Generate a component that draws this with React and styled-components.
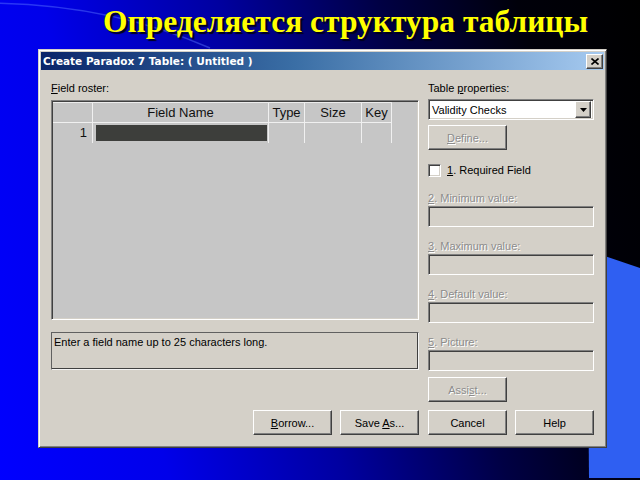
import React from "react";
import styled, { createGlobalStyle } from "styled-components";

const GlobalStyle = createGlobalStyle`
  html, body {
    margin: 0;
    padding: 0;
  }
  body {
    width: 640px;
    height: 480px;
    overflow: hidden;
    background: #000;
  }
`;

const Slide = styled.div`
  position: relative;
  width: 640px;
  height: 480px;
  overflow: hidden;
  display: flex;
  flex-direction: column;
  background: linear-gradient(
    75deg,
    #0000ff 0%,
    #0000ea 22%,
    #0000a0 45%,
    #000044 66%,
    #00000a 84%,
    #000 100%
  );
`;

const Backdrop = styled.svg`
  position: absolute;
  left: 0;
  top: 0;
  width: 640px;
  height: 480px;
  pointer-events: none;
`;

const Heading = styled.h1`
  position: relative;
  margin: 0;
  height: 49px;
  padding-left: 103px;
  box-sizing: border-box;
  font-family: "Liberation Serif", "Times New Roman", serif;
  font-weight: bold;
  font-size: 31.5px;
  line-height: 44px;
  color: #ffff00;
  text-shadow: 2px 2px 1px #00001a;
  white-space: nowrap;
`;

const Dialog = styled.div`
  position: relative;
  margin-left: 38px;
  width: 569px;
  height: 399px;
  box-sizing: border-box;
  padding: 2px;
  display: flex;
  flex-direction: column;
  background: #d4d0c8;
  border: 1px solid;
  border-color: #d4d0c8 #404040 #404040 #d4d0c8;
  box-shadow: inset 1px 1px #fff, inset -1px -1px #808080;
  font-family: "Liberation Sans", Arial, sans-serif;
  font-size: 11px;
  color: #000;
`;

const TitleBar = styled.div`
  height: 18px;
  display: flex;
  align-items: center;
  justify-content: space-between;
  padding: 0 1px 0 2px;
  background: linear-gradient(to right, #0a246a, #3a6ea5 45%, #a6caf0);
  color: #fff;
  font-family: "DejaVu Sans", Verdana, sans-serif;
  font-weight: bold;
  font-size: 10.5px;
`;

const raised = `
  border: 1px solid;
  border-color: #fff #404040 #404040 #fff;
  box-shadow: inset -1px -1px #808080;
  background: #d4d0c8;
  box-sizing: border-box;
`;

const sunken = `
  border: 1px solid;
  border-color: #808080 #fff #fff #808080;
  box-shadow: inset 1px 1px #404040, inset -1px -1px #d4d0c8;
  box-sizing: border-box;
`;

const CloseButton = styled.div`
  ${raised}
  width: 17px;
  height: 15px;
  display: flex;
  align-items: center;
  justify-content: center;
`;

const Body = styled.div`
  flex: 1;
  display: flex;
  gap: 9px;
  padding: 11px 10px 10px 10px;
`;

const Column = styled.div`
  width: ${(p) => p.$width}px;
  display: flex;
  flex-direction: column;
`;

const Label = styled.div`
  height: 14px;
  line-height: 14px;
  white-space: nowrap;
  margin-top: ${(p) => p.$top || 0}px;
  color: ${(p) => (p.$disabled ? "#8c8c8c" : "#000")};
  text-shadow: ${(p) => (p.$disabled ? "1px 1px #fff" : "none")};
`;

const Key = styled.span`
  text-decoration: underline;
`;

const Roster = styled.div`
  ${sunken}
  margin-top: 5px;
  height: 220px;
  padding: 1px;
  background: #c6c6c6;
`;

const RosterGrid = styled.div`
  display: grid;
  grid-template-columns: 40px 176px 36px 57px 30px;
  grid-template-rows: 20px 20px;
  width: max-content;
  border-top: 1px solid #ececec;
`;

const Cell = styled.div`
  box-sizing: border-box;
  border-right: 1px solid #f0f0f0;
  border-bottom: ${(p) => (p.$head ? "1px solid #f0f0f0" : "none")};
  font-size: 13px;
  line-height: 19px;
  text-align: ${(p) => p.$align || "center"};
  padding-right: ${(p) => (p.$align === "right" ? 5 : 0)}px;
  color: #111;
`;

const ActiveField = styled.div`
  margin: 2px 1px 1px 3px;
  height: 16px;
  background: #3d3e3b;
`;

const StatusBox = styled.div`
  margin-top: 12px;
  height: 38px;
  box-sizing: border-box;
  border: 1px solid;
  border-color: #606060 #f4f4f4 #f4f4f4 #606060;
  box-shadow: inset -1px -1px #404040;
  padding: 2px 2px;
  line-height: 14px;
`;

const ButtonRow = styled.div`
  margin-top: auto;
  display: flex;
  justify-content: ${(p) => p.$justify || "flex-end"};
  gap: ${(p) => p.$gap || 8}px;
`;

const Button = styled.div`
  ${raised}
  width: 79px;
  height: 25px;
  margin-top: ${(p) => p.$top || 0}px;
  display: flex;
  align-items: center;
  justify-content: center;
  color: ${(p) => (p.$disabled ? "#8c8c8c" : "#000")};
  text-shadow: ${(p) => (p.$disabled ? "1px 1px #fff" : "none")};
`;

const Select = styled.div`
  ${sunken}
  margin-top: 4px;
  height: 21px;
  background: #fff;
  display: flex;
  align-items: center;
  justify-content: space-between;
  padding: 2px 2px 2px 3px;
`;

const DropButton = styled.div`
  ${raised}
  width: 16px;
  height: 17px;
  display: flex;
  align-items: center;
  justify-content: center;
`;

const CheckRow = styled.div`
  margin-top: 14px;
  height: 13px;
  display: flex;
  align-items: center;
  gap: 6px;
  line-height: 13px;
`;

const CheckBox = styled.div`
  ${sunken}
  width: 13px;
  height: 13px;
  background: #fff;
`;

const Field = styled.div`
  margin-top: 1px;
  height: 21px;
  ${sunken}
  background: #d4d0c8;
`;

const props = [
  { key: "2", text: ". Minimum value:", top: 14 },
  { key: "3", text: ". Maximum value:", top: 12 },
  { key: "4", text: ". Default value:", top: 12 },
  { key: "5", text: ". Picture:", top: 12 },
];

export default function App() {
  return (
    <>
      <GlobalStyle />
      <Slide>
        <Backdrop viewBox="0 0 640 480">
          <path
            d="M -10 3 Q 110 4 210 48"
            fill="none"
            stroke="#5a78ff"
            strokeOpacity="0.45"
            strokeWidth="1.5"
          />
          <polygon points="587,250 640,268 640,478 589,478" fill="#2f5ff2" />
        </Backdrop>

        <Heading>Определяется структура таблицы</Heading>

        <Dialog>
          <TitleBar>
            <span>Create Paradox 7 Table: ( Untitled )</span>
            <CloseButton>
              <svg width="8" height="7" viewBox="0 0 8 7">
                <path
                  d="M0.5 0.5 L7.5 6.5 M7.5 0.5 L0.5 6.5"
                  stroke="#000"
                  strokeWidth="1.6"
                />
              </svg>
            </CloseButton>
          </TitleBar>

          <Body>
            <Column $width={368}>
              <Label>
                <Key>F</Key>ield roster:
              </Label>
              <Roster>
                <RosterGrid>
                  <Cell $head />
                  <Cell $head>Field Name</Cell>
                  <Cell $head>Type</Cell>
                  <Cell $head>Size</Cell>
                  <Cell $head>Key</Cell>
                  <Cell $align="right">1</Cell>
                  <Cell>
                    <ActiveField />
                  </Cell>
                  <Cell />
                  <Cell />
                  <Cell />
                </RosterGrid>
              </Roster>
              <StatusBox>Enter a field name up to 25 characters long.</StatusBox>
              <ButtonRow>
                <Button>
                  <span>
                    <Key>B</Key>orrow...
                  </span>
                </Button>
                <Button>
                  <span>
                    Save <Key>A</Key>s...
                  </span>
                </Button>
              </ButtonRow>
            </Column>

            <Column $width={166}>
              <Label>
                Table <Key>p</Key>roperties:
              </Label>
              <Select>
                <span>Validity Checks</span>
                <DropButton>
                  <svg width="7" height="4" viewBox="0 0 7 4">
                    <path d="M0 0 H7 L3.5 4 Z" fill="#000" />
                  </svg>
                </DropButton>
              </Select>
              <Button $top={5} $disabled>
                <span>
                  <Key>D</Key>efine...
                </span>
              </Button>
              <CheckRow>
                <CheckBox />
                <span>
                  <Key>1</Key>. Required Field
                </span>
              </CheckRow>
              {props.map((p) => (
                <React.Fragment key={p.key}>
                  <Label $top={p.top} $disabled>
                    <Key>{p.key}</Key>
                    {p.text}
                  </Label>
                  <Field />
                </React.Fragment>
              ))}
              <Button $top={6} $disabled>
                <span>
                  Assi<Key>s</Key>t...
                </span>
              </Button>
              <ButtonRow $justify="space-between" $gap={0}>
                <Button>Cancel</Button>
                <Button>Help</Button>
              </ButtonRow>
            </Column>
          </Body>
        </Dialog>
      </Slide>
    </>
  );
}
